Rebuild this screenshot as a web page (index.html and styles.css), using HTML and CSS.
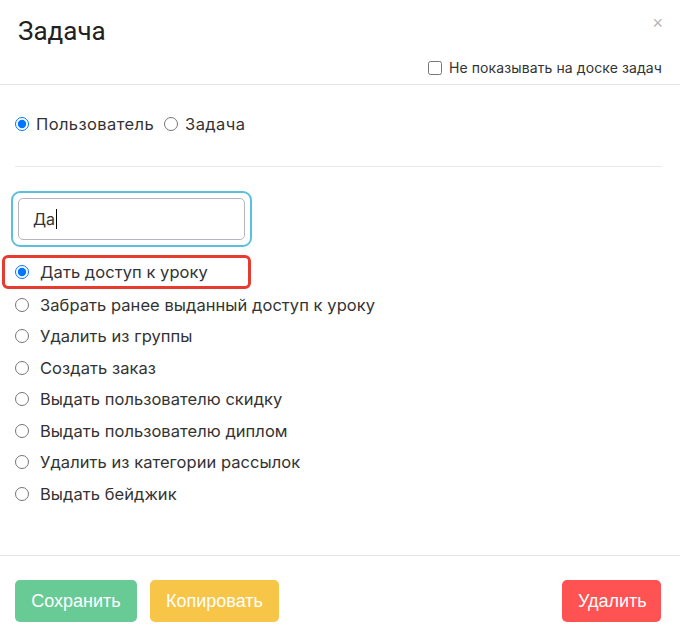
FILE: index.html
```html
<!DOCTYPE html>
<html lang="ru">
<head>
<meta charset="utf-8">
<link rel="stylesheet" href="styles.css">
</head>
<body>
<div class="modal">
  <div class="header">
    <div class="title-row">
      <h1 class="title">Задача</h1>
      <span class="close">×</span>
    </div>
    <label class="hide-opt"><input type="checkbox" class="cb"> Не показывать на доске задач</label>
  </div>
  <div class="body">
    <div class="type-row">
      <label class="opt"><input type="radio" name="t" checked class="rd">Пользователь</label>
      <label class="opt"><input type="radio" name="t" class="rd">Задача</label>
    </div>
    <div class="divider"></div>
    <div class="search-ring"><div class="search">Да<span class="caret"></span></div></div>
    <ul class="list">
      <li class="item first"><input type="radio" name="a" checked class="rd">Дать доступ к уроку<span class="hl"></span></li>
      <li class="item"><input type="radio" name="a" class="rd">Забрать ранее выданный доступ к уроку</li>
      <li class="item"><input type="radio" name="a" class="rd">Удалить из группы</li>
      <li class="item"><input type="radio" name="a" class="rd">Создать заказ</li>
      <li class="item"><input type="radio" name="a" class="rd">Выдать пользователю скидку</li>
      <li class="item"><input type="radio" name="a" class="rd">Выдать пользователю диплом</li>
      <li class="item"><input type="radio" name="a" class="rd">Удалить из категории рассылок</li>
      <li class="item"><input type="radio" name="a" class="rd">Выдать бейджик</li>
    </ul>
  </div>
  <div class="footer">
    <div class="left-btns">
      <button class="btn green">Сохранить</button>
      <button class="btn yellow">Копировать</button>
    </div>
    <button class="btn red">Удалить</button>
  </div>
</div>
</body>
</html>
```
FILE: styles.css
```css
html, body { margin: 0; padding: 0; background: #fff; }
.modal { width: 680px; height: 634px; display: flex; flex-direction: column; font-family: Inter, "Noto Sans", sans-serif; color: #333; }
.header { height: 85px; box-sizing: border-box; padding: 15px 18px 0 18px; border-bottom: 1px solid #e5e5e5; }
.title-row { display: flex; justify-content: space-between; align-items: flex-start; }
.title { margin: 0; font-family: Roboto, sans-serif; font-weight: 400; font-size: 26px; line-height: 32px; color: #222; }
.close { font-family: "Liberation Sans", sans-serif; font-size: 18px; line-height: 12px; color: #b5b5b5; margin-top: 2px; margin-right: -1px; }
.hide-opt { display: flex; justify-content: flex-end; align-items: center; margin-top: 11px; font-size: 14px; letter-spacing: 0.1px; line-height: 20px; color: #333; }
.cb { width: 14px; height: 14px; margin: 0 7px 0 0; }
.body { flex: 1; padding: 29px 18px 0 15px; }
.type-row { display: flex; align-items: center; height: 20px; font-size: 16.5px; letter-spacing: 0.4px; }
.opt { display: flex; align-items: center; margin-right: 10px; }
.rd { width: 14px; height: 14px; margin: 0 7px 0 0; }
.divider { height: 1px; background: #eaeaea; margin-top: 32px; }
.search-ring { width: 241px; height: 56px; box-sizing: border-box; margin: 24px 0 0 -4px; border: 2px solid #5bc0de; border-radius: 9px; padding: 5px; }
.search { height: 42px; box-sizing: border-box; border: 1px solid #b5b5c0; border-radius: 5px; padding: 0 14px; display: flex; align-items: center; font-size: 16px; color: #333; }
.caret { display: inline-block; width: 1px; height: 20px; background: #000; margin-left: 1px; }
.list { list-style: none; margin: 8px 0 0 0; padding: 0; }
.item { position: relative; display: flex; align-items: center; height: 31.5px; font-size: 16.5px; letter-spacing: 0.05px; color: #333; }
.item .rd { margin-right: 11px; }
.item.first { height: 34px; }
.hl { position: absolute; left: -13px; top: 0; width: 249px; height: 34px; box-sizing: border-box; border: 3px solid #e53b30; border-radius: 6px; }
.footer { height: 79px; box-sizing: border-box; border-top: 1px solid #e5e5e5; padding: 24px 19px 0 15px; display: flex; justify-content: space-between; align-items: flex-start; }
.left-btns { display: flex; gap: 13px; }
.btn { height: 42px; border: none; border-radius: 5px; color: #fff; font-family: "Liberation Sans", sans-serif; font-size: 18px; padding: 0 16px; }
.green { background: #68cb95; width: 122px; }
.yellow { background: #f7c548; width: 129px; }
.red { background: #ff5353; width: 99px; }
```
